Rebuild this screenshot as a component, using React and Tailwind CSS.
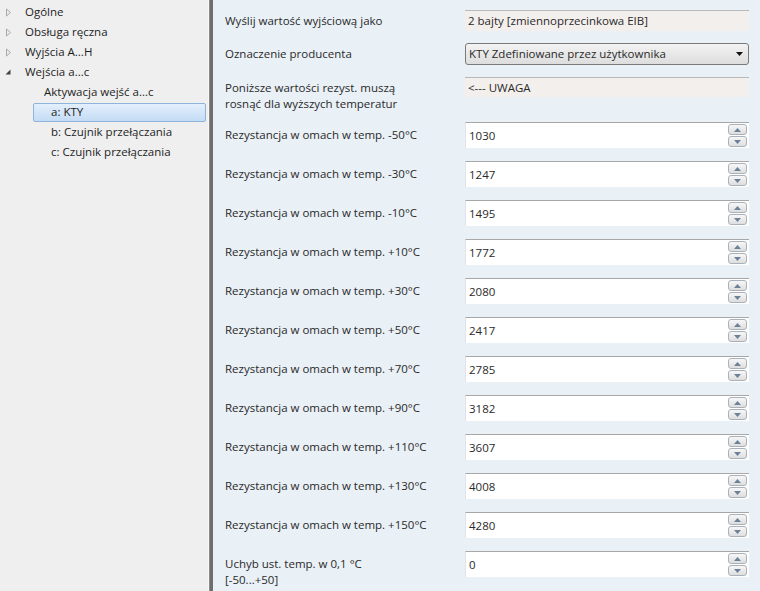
import React from "react";

const rows = [
  ["-50", "1030"],
  ["-30", "1247"],
  ["-10", "1495"],
  ["+10", "1772"],
  ["+30", "2080"],
  ["+50", "2417"],
  ["+70", "2785"],
  ["+90", "3182"],
  ["+110", "3607"],
  ["+130", "4008"],
  ["+150", "4280"],
];

function Arrow({ open }) {
  if (open) {
    return (
      <svg width="8" height="8" viewBox="0 0 8 8" className="shrink-0">
        <path d="M6.5 1.5 L6.5 6.5 L1.5 6.5 Z" fill="#404040" />
      </svg>
    );
  }
  return (
    <svg width="8" height="9" viewBox="0 0 8 9" className="shrink-0">
      <path d="M2.5 1 L6.5 4.5 L2.5 8 Z" fill="none" stroke="#a8a8a8" />
    </svg>
  );
}

function TreeItem({ label, level, arrow, selected }) {
  const pad = level === 0 ? "pl-[4px]" : level === 1 ? "pl-[44px]" : "pl-[33px]";
  return (
    <div className={`h-[20px] flex items-center ${pad}`}>
      {level === 0 && (
        <div className="w-[21px] flex items-center">
          <Arrow open={arrow === "open"} />
        </div>
      )}
      {selected ? (
        <div className="flex-1 h-[19px] flex items-center pl-[17px] rounded-[2px] border border-[#8fb4dc] bg-gradient-to-b from-[#e3effc] to-[#c4dcf5] mr-[2px]">
          {label}
        </div>
      ) : (
        <div className={level === 2 ? "pl-[18px]" : ""}>{label}</div>
      )}
    </div>
  );
}

function Spinner() {
  return (
    <div className="flex flex-col gap-[1px] mr-[2px]">
      <div className="w-[19px] h-[11px] rounded-[3px] border border-[#a9b2bb] bg-gradient-to-b from-[#f7f7f7] to-[#dedede] flex items-center justify-center">
        <svg width="7" height="4" viewBox="0 0 7 4">
          <path d="M0 4 L3.5 0 L7 4 Z" fill="#6b8299" />
        </svg>
      </div>
      <div className="w-[19px] h-[11px] rounded-[3px] border border-[#a9b2bb] bg-gradient-to-b from-[#f7f7f7] to-[#dedede] flex items-center justify-center">
        <svg width="7" height="4" viewBox="0 0 7 4">
          <path d="M0 0 L7 0 L3.5 4 Z" fill="#6b8299" />
        </svg>
      </div>
    </div>
  );
}

function NumberField({ value }) {
  return (
    <div className="h-[26px] flex items-center justify-between bg-white border-t border-[#a7a7a7] border-l border-l-[#e2e3ea] pl-[3px]">
      <span>{value}</span>
      <Spinner />
    </div>
  );
}

function ReadOnly({ value }) {
  return (
    <div className="h-[21px] flex items-center bg-[#f3efed] border-t border-[#b8b8b8] pl-[3px]">
      {value}
    </div>
  );
}

export default function App() {
  return (
    <div
      className="w-[760px] h-[591px] flex overflow-hidden text-[11.5px] text-[#1e1e1e]"
      style={{ fontFamily: "'Segoe UI', 'Open Sans', sans-serif" }}
    >
      {/* tree */}
      <div className="w-[208px] bg-[#efefef] pt-[2px]">
        <TreeItem label="Ogólne" level={0} />
        <TreeItem label="Obsługa ręczna" level={0} />
        <TreeItem label="Wyjścia A...H" level={0} />
        <TreeItem label="Wejścia a...c" level={0} arrow="open" />
        <TreeItem label="Aktywacja wejść a...c" level={1} />
        <TreeItem label="a: KTY" level={2} selected />
        <TreeItem label="b: Czujnik przełączania" level={2} />
        <TreeItem label="c: Czujnik przełączania" level={2} />
      </div>

      {/* splitter */}
      <div className="w-[5px] flex">
        <div className="w-[1px] bg-[#f7f7f7]" />
        <div className="w-[4px] bg-[#6e6e6e] border-l border-[#8a8a8a]" />
      </div>

      {/* params */}
      <div className="flex-1 bg-[#e9f0f6] pt-[10px] pl-[12px] pr-[11px] text-[#2a2a2a]">
        <div className="grid grid-cols-[240px_1fr] h-[21px] items-center">
          <div>Wyślij wartość wyjściową jako</div>
          <ReadOnly value="2 bajty [zmiennoprzecinkowa EIB]" />
        </div>

        <div className="grid grid-cols-[240px_1fr] h-[22px] items-center mt-[12px]">
          <div>Oznaczenie producenta</div>
          <div className="h-[22px] flex items-center justify-between rounded-[3px] border border-[#7a7a7a] bg-gradient-to-b from-[#f3f3f3] to-[#dddddd] pl-[3px] pr-[5px]">
            <span>KTY Zdefiniowane przez użytkownika</span>
            <svg width="7" height="4" viewBox="0 0 7 4">
              <path d="M0 0 L7 0 L3.5 4 Z" fill="#111" />
            </svg>
          </div>
        </div>

        <div className="grid grid-cols-[240px_1fr] h-[34px] items-start mt-[12px]">
          <div className="pt-[3px] leading-[16px]">
            Poniższe wartości rezyst. muszą
            <br />
            rosnąć dla wyższych temperatur
          </div>
          <div className="h-[20px] flex items-center bg-[#f3efed] border-t border-[#b8b8b8] pl-[3px]">
            &lt;--- UWAGA
          </div>
        </div>

        <div className="flex flex-col gap-[13px] mt-[11px]">
          {rows.map(([t, v]) => (
            <div key={t} className="grid grid-cols-[240px_1fr] h-[26px] items-center">
              <div>Rezystancja w omach w temp. {t}°C</div>
              <NumberField value={v} />
            </div>
          ))}
          <div className="grid grid-cols-[240px_1fr] h-[26px] items-start">
            <div className="pt-[5px] leading-[16px]">
              Uchyb ust. temp. w 0,1 °C
              <br />
              [-50...+50]
            </div>
            <NumberField value="0" />
          </div>
        </div>
      </div>
    </div>
  );
}
